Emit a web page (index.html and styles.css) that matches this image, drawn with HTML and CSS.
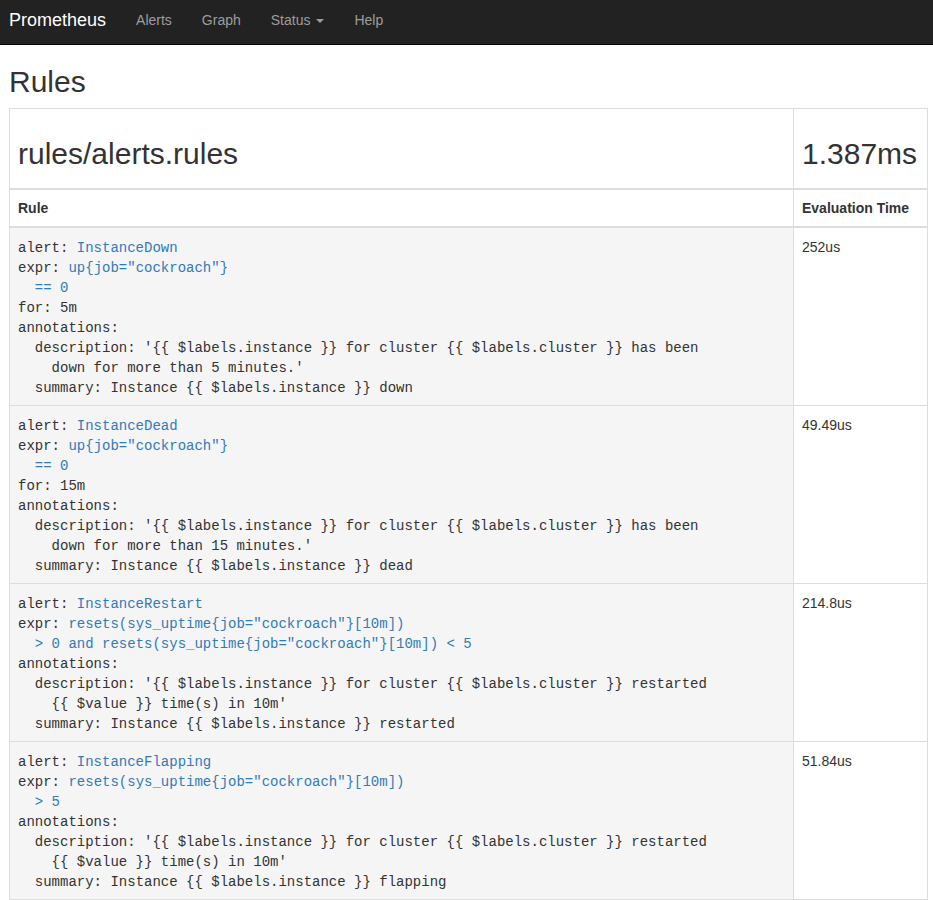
FILE: index.html
```html
<!DOCTYPE html>
<html lang="en">
<head>
<meta charset="utf-8">
<title>Prometheus Time Series Collection and Processing Server</title>
<link rel="stylesheet" href="styles.css">
</head>
<body>
<nav class="navbar">
  <a class="brand" href="#">Prometheus</a>
  <ul class="nav">
    <li><a href="#">Alerts</a></li>
    <li><a href="#">Graph</a></li>
    <li><a href="#">Status <span class="caret"></span></a></li>
    <li><a href="#">Help</a></li>
  </ul>
</nav>
<main class="container">
  <h2 class="page-title">Rules</h2>
  <table class="rules-table">
    <thead>
      <tr class="group-row">
        <td><h2 class="group-title">rules/alerts.rules</h2></td>
        <td class="time-col"><h2 class="group-title">1.387ms</h2></td>
      </tr>
      <tr class="head-row">
        <th>Rule</th>
        <th class="time-col">Evaluation Time</th>
      </tr>
    </thead>
    <tbody>
      <tr>
        <td class="rule-cell">alert: <a href="#">InstanceDown</a>
expr: <a href="#">up{job="cockroach"}</a>
  <a href="#">== 0</a>
for: 5m
annotations:
  description: '{{ $labels.instance }} for cluster {{ $labels.cluster }} has been
    down for more than 5 minutes.'
  summary: Instance {{ $labels.instance }} down</td>
        <td class="time-cell">252us</td>
      </tr>
      <tr>
        <td class="rule-cell">alert: <a href="#">InstanceDead</a>
expr: <a href="#">up{job="cockroach"}</a>
  <a href="#">== 0</a>
for: 15m
annotations:
  description: '{{ $labels.instance }} for cluster {{ $labels.cluster }} has been
    down for more than 15 minutes.'
  summary: Instance {{ $labels.instance }} dead</td>
        <td class="time-cell">49.49us</td>
      </tr>
      <tr>
        <td class="rule-cell">alert: <a href="#">InstanceRestart</a>
expr: <a href="#">resets(sys_uptime{job="cockroach"}[10m])</a>
  <a href="#">&gt; 0 and resets(sys_uptime{job="cockroach"}[10m]) &lt; 5</a>
annotations:
  description: '{{ $labels.instance }} for cluster {{ $labels.cluster }} restarted
    {{ $value }} time(s) in 10m'
  summary: Instance {{ $labels.instance }} restarted</td>
        <td class="time-cell">214.8us</td>
      </tr>
      <tr>
        <td class="rule-cell">alert: <a href="#">InstanceFlapping</a>
expr: <a href="#">resets(sys_uptime{job="cockroach"}[10m])</a>
  <a href="#">&gt; 5</a>
annotations:
  description: '{{ $labels.instance }} for cluster {{ $labels.cluster }} restarted
    {{ $value }} time(s) in 10m'
  summary: Instance {{ $labels.instance }} flapping</td>
        <td class="time-cell">51.84us</td>
      </tr>
    </tbody>
  </table>
</main>
</body>
</html>
```

FILE: styles.css
```css
* {
  box-sizing: border-box;
}

html, body {
  margin: 0;
  padding: 0;
  background: #fff;
}

body {
  font-family: "Liberation Sans", Arial, Helvetica, sans-serif;
  font-size: 14px;
  line-height: 20px;
  color: #333;
}

a {
  color: #337ab7;
  text-decoration: none;
}

.navbar {
  display: flex;
  align-items: center;
  height: 45px;
  background: #222;
  border-bottom: 1px solid #080808;
  padding: 0 0 0 9px;
}

.brand {
  color: #fff;
  font-size: 18px;
  line-height: 20px;
  padding: 0 15px 4px 0;
}

.nav {
  display: flex;
  list-style: none;
  margin: 0;
  padding: 0;
}

.nav a {
  display: block;
  color: #9d9d9d;
  font-size: 14px;
  line-height: 20px;
  padding: 0 15px 4px;
}

.caret {
  display: inline-block;
  width: 0;
  height: 0;
  margin-left: 2px;
  vertical-align: middle;
  border-top: 4px solid #9d9d9d;
  border-left: 4px solid transparent;
  border-right: 4px solid transparent;
}

.container {
  padding: 0 5px 0 9px;
}

.page-title {
  font-size: 30px;
  font-weight: 500;
  line-height: 33px;
  margin: 20px 0 10px;
  color: #333;
}

.rules-table {
  width: 100%;
  border-collapse: collapse;
  border-spacing: 0;
  border: 1px solid #ddd;
}

.rules-table td,
.rules-table th {
  border: 1px solid #ddd;
  padding: 8px;
  vertical-align: top;
  text-align: left;
  line-height: 20px;
}

.rules-table th {
  font-weight: bold;
  border-bottom-width: 2px;
}

.group-row td {
  border-bottom-width: 2px;
}

.group-title {
  font-size: 30px;
  font-weight: 500;
  line-height: 33px;
  margin: 20px 0 10px;
  color: #333;
}

.time-col {
  width: 134px;
}

.rules-table .rule-cell {
  background: #f5f5f5;
  white-space: pre-wrap;
  font-family: "Liberation Mono", "Courier New", monospace;
  font-size: 14px;
  color: #333;
  padding: 10px 8px 7px;
}

.rules-table .time-cell {
  background: #fff;
  padding-top: 9px;
}
```
